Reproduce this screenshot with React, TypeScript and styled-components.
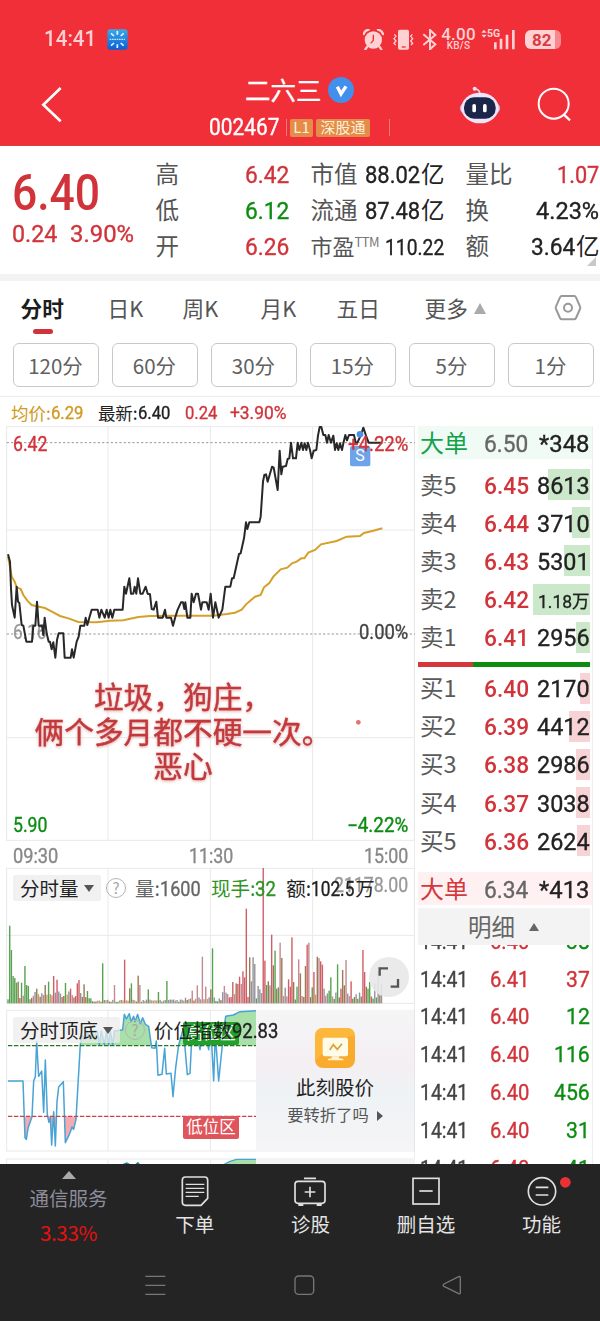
import React from "react";
import styled, { createGlobalStyle } from "styled-components";

const RED = "#d0343a";
const GREEN = "#0d8c12";
const CJK = '"Noto Sans CJK SC", sans-serif';
const LATIN = 'Roboto, "Noto Sans CJK SC", sans-serif';

const Global = createGlobalStyle`
  * { box-sizing: border-box; }
  body { margin: 0; background: #fff; font-family: ${CJK}; color: #222; }
`;

/* Figures are set in a narrowed face: each one is fitted to a given width. */
const advance = (ch: string) => {
  if (ch === ".") return 0.28;
  if (ch === ":") return 0.26;
  if (ch === "%") return 0.74;
  if (ch === "+") return 0.56;
  if (ch === "*") return 0.44;
  if (ch === "−") return 0.57;
  if (ch > "\u2fff") return 1;
  return 0.567;
};
const FigureBox = styled.span<{ $w: number }>`
  display: inline-block;
  width: ${(p) => p.$w}px;
  white-space: nowrap;
`;
const FigureText = styled.span<{ $size: number; $scale: number; $weight: number; $color?: string }>`
  display: inline-block;
  font-family: ${LATIN};
  font-size: ${(p) => p.$size}px;
  font-weight: ${(p) => p.$weight};
  -webkit-text-stroke: ${(p) => (p.$weight === 400 ? "0.35px currentColor" : "0")};
  line-height: 1;
  color: ${(p) => p.$color ?? "inherit"};
  transform: scaleX(${(p) => p.$scale});
  transform-origin: left center;
`;
type FigureProps = { children: string; size: number; w: number; weight?: number; color?: string };
const Figure = ({ children, size, w, weight = 400, color }: FigureProps) => {
  const natural = [...children].reduce((s, c) => s + advance(c), 0) * size;
  return (
    <FigureBox $w={w}>
      <FigureText $size={size} $scale={w / natural} $weight={weight} $color={color}>
        {children}
      </FigureText>
    </FigureBox>
  );
};

const Screen = styled.div`
  width: 600px;
  height: 1321px;
  overflow: hidden;
  display: flex;
  flex-direction: column;
  background: #fff;
`;

/* ---------- header ---------- */
const Header = styled.header`
  height: 146px;
  flex: none;
  background: #f12f38;
  border-bottom: 1px solid #d93f49;
  color: #fff;
`;
const StatusBar = styled.div`
  height: 76px;
  padding: 2px 39px 0 44px;
  display: flex;
  align-items: center;
  color: #ffd1d3;
`;
const AppBadge = styled.svg`
  margin-left: 11px;
`;
const StatusIcons = styled.div`
  margin-left: auto;
  display: flex;
  align-items: center;
`;
const Speed = styled.div`
  width: 35px;
  margin: 0 4px 0 3px;
  text-align: center;
  font: 500 17px/13px Roboto, sans-serif;
  letter-spacing: 0.2px;
  small {
    display: block;
    font: 500 10px/9px Roboto, sans-serif;
  }
`;
const Network = styled.div`
  display: flex;
  position: relative;
  width: 37px;
  height: 21px;
  span {
    position: absolute;
    left: 7px;
    top: -1px;
    font: 700 10.5px/12px Roboto, sans-serif;
  }
`;
const Battery = styled.div`
  width: 36px;
  height: 19px;
  margin-left: 8px;
  border-radius: 6px;
  background: linear-gradient(90deg, #ffd1d3 30px, #f8888e 30px);
  color: #d93b42;
  font: 700 17px/20px Roboto, sans-serif;
  padding-left: 7px;
`;
const TitleBar = styled.div`
  height: 69px;
  display: grid;
  grid-template-columns: 209px 190px 1fr;
`;
const BackCell = styled.div`
  padding: 10px 0 0 40px;
`;
const TitleCell = styled.div`
  display: flex;
  flex-direction: column;
`;
const Name = styled.div`
  display: flex;
  align-items: center;
  gap: 6px;
  height: 28px;
  padding-left: 36px;
  font-size: 25.5px;
  line-height: 28px;
  span {
    height: 30px;
    -webkit-text-stroke: 0.3px currentColor;
  }
`;
const CodeRow = styled.div`
  display: flex;
  align-items: center;
  height: 23px;
  margin-top: 12px;
`;
const Rule = styled.i<{ $ml: number }>`
  width: 1px;
  height: 17px;
  margin-left: ${(p) => p.$ml}px;
  background: #f27a70;
`;
const Tag = styled.span<{ $w: number; $ml: number }>`
  width: ${(p) => p.$w}px;
  margin-left: ${(p) => p.$ml}px;
  height: 18px;
  border-radius: 2px;
  background: #e48d4b;
  color: #fff0d9;
  font: 15px/16px ${CJK};
  text-align: center;
`;
const HeaderActions = styled.div`
  display: flex;
  padding: 10px 0 0 60px;
  gap: 36px;
`;

/* ---------- quote ---------- */
const Quote = styled.section`
  flex: none;
  height: 135px;
  border-bottom: 7px solid #f3f3f3;
  padding-left: 12px;
  display: grid;
  grid-template-columns: 143.5px 134px 134px 134px;
  position: relative;
`;
const PriceBlock = styled.div`
  padding-top: 20px;
  color: ${RED};
`;
const BigPrice = styled.div`
  height: 54px;
  display: flex;
  align-items: center;
`;
const Change = styled.div`
  display: flex;
  gap: 12px;
  height: 26px;
  align-items: center;
  margin-top: 1px;
`;
const StatColumn = styled.div<{ $ml?: number }>`
  padding-top: 9px;
  margin-left: ${(p) => p.$ml ?? 0}px;
  width: 134px;
`;
const Stat = styled.div`
  height: 36.2px;
  display: flex;
  align-items: center;
  justify-content: space-between;
  font-size: 23.5px;
  line-height: 35px;
  color: #555;
  white-space: nowrap;
`;
const Ratio = styled.span`
  display: inline-flex;
  font-size: 22px;
  sup {
    font-size: 13px;
    line-height: 28px;
    letter-spacing: -0.5px;
    color: #777;
    vertical-align: baseline;
  }
`;
const Unit = styled.span`
  display: inline-flex;
  align-items: center;
  color: #222;
`;
const Corner = styled.i`
  position: absolute;
  right: 4px;
  bottom: 8px;
  border-left: 9px solid transparent;
  border-bottom: 9px solid #c8c8c8;
`;

/* ---------- tabs ---------- */
const Tabs = styled.nav`
  flex: none;
  height: 54px;
  display: grid;
  grid-template-columns: 87px 75px 78px 76px 88px 149px 1fr;
  padding-left: 20.5px;
`;
const Tab = styled.div<{ $active?: boolean }>`
  font-size: 21.7px;
  line-height: 53px;
  height: 53px;
  color: ${(p) => (p.$active ? "#1d1d1d" : "#555")};
  font-weight: ${(p) => (p.$active ? 700 : 400)};
  &::after {
    content: "";
    display: ${(p) => (p.$active ? "block" : "none")};
    width: 20px;
    height: 5px;
    margin: -5px 0 0 12px;
    border-radius: 3px;
    background: ${RED};
  }
`;
const UpMark = styled.i<{ $w: number; $h: number; $c: string; $ml: number; $up?: number }>`
  display: inline-block;
  margin-left: ${(p) => p.$ml}px;
  border: ${(p) => p.$w / 2}px solid transparent;
  border-top: 0;
  border-bottom: ${(p) => p.$h}px solid ${(p) => p.$c};
  vertical-align: ${(p) => p.$up ?? 0}px;
`;
const DownMark = styled.i`
  display: inline-block;
  border: 5px solid transparent;
  border-bottom: 0;
  border-top: 7px solid #555;
`;
const Periods = styled.div`
  flex: none;
  height: 62px;
  padding: 8px 0 0 12.5px;
  display: flex;
  gap: 13px;
  border-bottom: 1px solid #ededed;
`;
const Period = styled.button`
  flex: none;
  width: 86px;
  height: 44px;
  padding: 0;
  border: 1px solid #c9c9c9;
  border-radius: 6px;
  background: #fff;
  color: #606060;
  font: 20.5px/42px ${CJK};
`;
const Legend = styled.div`
  flex: none;
  height: 29px;
  display: flex;
  align-items: center;
  padding: 2px 0 0 11px;
  font-size: 17.5px;
  line-height: 20px;
`;
const LegendItem = styled.span<{ $c: string; $mr?: number }>`
  display: inline-flex;
  align-items: center;
  color: ${(p) => p.$c};
  margin-right: ${(p) => p.$mr ?? 14}px;
`;

/* ---------- body ---------- */
const Body = styled.main`
  flex: none;
  height: 738px;
  overflow: hidden;
  display: grid;
  grid-template-columns: 414px 186px;
`;
const Charts = styled.div`
  padding-left: 6px;
`;
const Panel = styled.div<{ $h: number; $gap?: number }>`
  position: relative;
  width: 409px;
  height: ${(p) => p.$h}px;
  margin-bottom: ${(p) => p.$gap ?? 0}px;
  svg {
    display: block;
  }
`;
const AxisLabel = styled.div<{ $top: number; $right?: boolean; $faded?: boolean }>`
  position: absolute;
  top: ${(p) => p.$top}px;
  ${(p) => (p.$right ? "right: 6px;" : "left: 7px;")}
  line-height: 20px;
  opacity: ${(p) => (p.$faded ? 0.75 : 1)};
`;
const Trace = styled.svg`
  position: absolute;
  left: 0;
  top: 0;
`;
const Remark = styled.div`
  position: absolute;
  left: 0;
  top: 253px;
  width: 354px;
  text-align: center;
  font-size: 29.7px;
  line-height: 34.5px;
  -webkit-text-stroke: 0.4px #c2393c;
  color: #c2393c;
  white-space: nowrap;
  filter: drop-shadow(0 1px 1.5px #e3aaaa);
`;
const TimeAxis = styled.div`
  height: 26px;
  width: 409px;
  display: flex;
  justify-content: space-between;
  align-items: center;
  padding: 4px 6px 0 7px;
  line-height: 20px;
`;
const Overlay = styled.div<{ $top: number }>`
  position: absolute;
  left: 7px;
  top: ${(p) => p.$top}px;
  height: 26px;
  display: flex;
  align-items: center;
  white-space: nowrap;
  font-size: 19.5px;
  line-height: 26px;
`;
const Picker = styled.div<{ $w: number }>`
  width: ${(p) => p.$w}px;
  height: 26px;
  padding-left: 7px;
  display: flex;
  align-items: center;
  gap: 5px;
  background: rgba(236, 236, 236, 0.75);
  border-radius: 2px;
  color: #222;
`;
const Help = styled.span`
  width: 20px;
  height: 20px;
  margin: 0 9px 0 5px;
  border: 1px solid #b5b5b5;
  border-radius: 50%;
  text-align: center;
  font: 15px/18px ${CJK};
  color: #a8a8a8;
`;
const Reading = styled.span<{ $c: string; $mr?: number }>`
  display: inline-flex;
  align-items: center;
  margin-right: ${(p) => p.$mr ?? 10}px;
  color: ${(p) => p.$c};
`;
const Expand = styled.div`
  position: absolute;
  right: 6px;
  top: 90px;
  width: 40px;
  height: 40px;
  border-radius: 50%;
  background: rgba(232, 232, 232, 0.9);
`;
const Zone = styled.div<{ $top: number; $bg: string }>`
  position: absolute;
  left: 177px;
  top: ${(p) => p.$top}px;
  width: 56px;
  height: 23px;
  border-radius: 2px;
  background: ${(p) => p.$bg};
  color: #fff;
  font: 16.5px/21px ${CJK};
  text-align: center;
`;
const Promo = styled.div`
  position: absolute;
  right: 0;
  top: 1px;
  width: 159px;
  height: 142px;
  display: flex;
  flex-direction: column;
  align-items: center;
  background: linear-gradient(180deg, #f5f5f6 0%, #f4eff3 38%, #eef3f5 62%, #f6f4f6 100%);
  border-right: 1px solid #e6e6e6;
  padding-top: 18px;
  b {
    font: 19.5px/28px ${CJK};
    margin-top: 5px;
    color: #222;
  }
  span {
    font: 16.3px/24px ${CJK};
    color: #555;
    margin: 1px 0 0 0;
  }
  i {
    display: inline-block;
    border: 5px solid transparent;
    border-right: 0;
    border-left: 6px solid #555;
    margin-left: 8px;
    vertical-align: 0;
  }
`;

/* ---------- order book ---------- */
const Book = styled.div`
  width: 179px;
  padding-left: 3px;
  border-left: 1px solid #ececec;
  border-right: 1px solid #eee;
  height: 738px;
  overflow: hidden;
`;
const Block = styled.div<{ $bg: string; $c: string; $mt?: number }>`
  height: 33px;
  margin-top: ${(p) => p.$mt ?? 0}px;
  padding: 0 0 1px 2px;
  display: grid;
  grid-template-columns: 64px 48px 58px;
  align-items: center;
  background: ${(p) => p.$bg};
  color: ${(p) => p.$c};
  font-size: 24px;
  line-height: 32px;
`;
const Level = styled.div<{ $bar: number; $bg: string }>`
  height: 38.2px;
  padding: 0 0 2px 2px;
  display: grid;
  grid-template-columns: 64px 48px 58px;
  align-items: center;
  color: #5a5a5a;
  font-size: 23.5px;
  line-height: 36px;
  width: 172px;
  background: linear-gradient(${(p) => p.$bg}, ${(p) => p.$bg}) right center / ${(p) => p.$bar}px 31px no-repeat;
`;
const Right = styled.div`
  text-align: right;
  display: flex;
  justify-content: flex-end;
  align-items: center;
`;
const Levels = styled.div<{ $mt: number }>`
  margin-top: ${(p) => p.$mt}px;
`;
const Balance = styled.div`
  width: 172px;
  height: 5px;
  margin-top: 6px;
  background: linear-gradient(90deg, #d5383c 55px, #0d8c12 55px);
`;
const DetailHead = styled.div`
  margin-top: 3px;
  width: 172px;
  height: 37px;
  background: #f3f3f3;
  color: #666;
  font-size: 23.5px;
  line-height: 37px;
  padding-left: 50px;
`;
const Ticks = styled.div`
  height: 219px;
  overflow: hidden;
  width: 172px;
`;
const TickList = styled.div`
  margin-top: -22px;
`;
const Tick = styled.div`
  height: 37.8px;
  padding-left: 2px;
  display: grid;
  grid-template-columns: 70px 42px 58px;
  align-items: center;
  line-height: 38px;
`;

/* ---------- bottom ---------- */
const Bottom = styled.footer`
  flex: none;
  height: 157px;
  background: #242424;
`;
const Nav = styled.div`
  height: 84px;
  display: grid;
  grid-template-columns: 137px repeat(4, 115.6px);
`;
const Sector = styled.div`
  display: flex;
  flex-direction: column;
  align-items: center;
  padding-top: 7px;
  color: #8c8c9b;
  font-size: 19.5px;
  line-height: 28px;
  span {
    margin-top: 5px;
  }
  b {
    margin-top: 6px;
    font: 20.5px/28px ${CJK};
    letter-spacing: -0.3px;
    color: #e90f10;
  }
`;
const NavItem = styled.div`
  display: flex;
  flex-direction: column;
  align-items: center;
  padding-top: 11px;
  color: #e4e4e4;
  font-size: 19.5px;
  line-height: 28px;
  svg {
    margin-bottom: 3px;
    overflow: visible;
  }
`;
const SystemNav = styled.div`
  height: 73px;
  display: flex;
  padding: 26px 0 0 140px;
  gap: 119px;
`;

/* ---------- chart data ---------- */
const price =
  "24,658 30,680 33,760 36,810 44,848 50,755 54,800 58,804 65,870 70,872 79,920 96,920 100,872 106,872 111,800 116,872 126,872 130,900 134,848 140,895 146,920 150,920 155,943 160,922 166,968 171,915 176,895 190,895 194,968 212,968 216,943 221,968 230,920 236,905 241,872 253,872 257,848 262,870 268,848 275,824 293,824 298,848 304,824 314,848 320,824 326,848 331,824 337,848 343,824 368,824 373,755 378,776 388,730 393,776 400,776 404,755 409,776 414,730 421,776 428,776 437,755 443,776 450,778 455,822 461,824 469,800 474,848 488,848 495,824 499,848 513,848 519,872 526,846 533,824 543,802 549,802 553,822 556,802 562,848 571,848 575,776 581,802 588,776 594,776 603,824 607,802 620,802 626,824 632,776 639,848 646,802 656,848 667,824 676,755 691,755 696,730 701,730 717,657 722,655 732,610 738,562 742,582 748,562 778,562 782,545 789,440 793,420 798,418 803,440 816,395 821,398 833,465 839,347 844,418 848,395 858,393 863,372 868,370 873,323 879,370 888,370 893,323 898,345 904,323 909,345 914,325 919,345 924,323 930,345 935,370 941,347 949,345 954,302 959,276 964,276 970,300 976,300 981,323 986,300 993,323 1000,302 1005,345 1010,325 1015,345 1020,325 1026,345 1030,325 1036,300 1041,316 1047,300 1062,300 1067,323 1072,323 1083,300 1090,278 1098,302 1106,323 1147,323";
const average =
  "24,665 29,690 35,725 44,740 50,757 62,762 70,780 82,797 95,810 110,814 135,819 160,832 180,843 205,850 235,861 290,862 330,857 370,856 415,846 450,843 520,842 640,842 680,837 705,833 725,824 738,808 765,785 782,780 792,757 808,744 820,725 842,703 862,698 876,685 890,680 904,670 913,670 925,653 945,645 963,628 1010,618 1040,605 1080,603 1092,594 1120,587 1147,580";
const zone =
  "24,228 69,228 75,398 79,403 84,370 96,335 101,228 106,215 110,110 116,214 125,198 131,322 136,165 142,330 147,352 151,338 155,420 161,320 166,423 171,290 176,246 190,230 196,413 205,395 212,378 216,366 221,373 228,343 234,238 241,118 247,92 256,102 262,78 270,104 275,78 292,78 298,118 304,78 313,118 320,78 326,120 331,78 338,120 343,78 368,74 373,28 379,42 388,26 393,50 401,34 405,50 413,28 421,56 428,38 436,58 446,64 455,128 465,130 469,108 474,211 486,208 494,130 499,207 513,205 519,275 527,188 536,120 550,70 562,209 570,205 576,85 585,60 600,134 607,95 616,80 626,134 632,62 641,227 646,88 656,228 664,150 672,72 677,34 700,30 720,20 768,17";

const HIGH: Record<number, [number, string]> = {
  1: [233, "g"], 2: [160, "g"], 3: [82, "g"], 4: [76, "g"], 5: [62, "g"], 6: [65, "n"], 8: [62, "g"], 10: [112, "g"], 11: [55, "g"], 12: [52, "g"],
  17: [44, "n"], 22: [55, "n"], 24: [65, "g"], 27: [82, "r"], 29: [71, "r"], 34: [61, "g"], 37: [44, "r"], 41: [60, "r"], 42: [70, "r"], 45: [57, "n"], 47: [37, "g"],
  56: [120, "g"], 63: [55, "p"], 69: [131, "r"], 72: [45, "n"], 73: [60, "g"], 77: [83, "n"], 78: [55, "p"], 83: [42, "g"], 89: [34, "g"], 94: [67, "g"],
  109: [38, "p"], 112: [54, "p"], 115: [140, "p"], 117: [50, "p"], 120: [42, "n"], 121: [165, "g"], 128: [52, "p"], 133: [64, "r"], 135: [60, "n"], 136: [58, "r"], 137: [80, "r"],
  138: [58, "p"], 139: [96, "r"], 140: [78, "r"], 141: [284, "r"], 143: [138, "n"], 144: [66, "s"], 145: [138, "s"], 146: [118, "s"], 148: [52, "s"], 149: [42, "s"], 151: [406, "r"], 152: [128, "r"],
  153: [55, "g"], 154: [66, "n"], 155: [54, "s"], 156: [206, "r"], 157: [114, "n"], 158: [158, "g"], 159: [44, "n"], 160: [48, "g"], 161: [182, "p"], 162: [136, "n"], 164: [47, "s"], 166: [72, "r"], 167: [50, "r"],
  168: [198, "r"], 169: [64, "n"], 171: [50, "g"], 172: [132, "p"], 173: [90, "n"], 176: [112, "n"], 177: [176, "r"], 178: [182, "p"], 180: [48, "g"], 181: [94, "r"], 183: [140, "n"], 184: [136, "p"], 185: [126, "r"], 186: [116, "r"], 187: [44, "s"],
  190: [38, "g"], 191: [78, "g"], 195: [117, "g"], 197: [44, "r"], 198: [100, "n"], 199: [54, "n"], 200: [130, "p"], 203: [66, "r"], 210: [160, "r"], 211: [94, "r"], 212: [50, "n"], 213: [44, "g"], 214: [64, "g"], 217: [60, "s"], 219: [96, "s"], 221: [60, "s"],
};
const INK: Record<string, string> = { g: "#58a350", r: "#cf5f66", p: "#c48a90", n: "#9a7a55", s: "#93939a", o: "#c6a063" };
const bars = Array.from({ length: 222 }, (_, i) => {
  const known = HIGH[i];
  if (known) return { x: 22 + i * 5.07, h: known[0], c: INK[known[1]] };
  const n = (Math.sin(i * 12.9898) * 43758.5453) % 1;
  const r = Math.abs(n);
  const base = i < 50 ? 24 : i < 105 ? 8 : i < 127 ? 12 : i < 150 ? 26 : i > 213 ? 28 : 22;
  return { x: 22 + i * 5.07, h: base * (0.5 + r), c: INK["grnposs"[Math.floor(r * 6.99)]] };
});

const Grid = ({ ys, bottom, top }: { ys: number[]; top: number; bottom: number }) => (
  <g stroke="#e9e9e9" strokeWidth="3">
    {[20, 324, 631, 938, 1243].map((x) => (
      <line key={x} x1={x} x2={x} y1={top} y2={bottom} />
    ))}
    {ys.map((y) => (
      <line key={y} x1="18" x2="1245" y1={y} y2={y} />
    ))}
  </g>
);

const sells: [string, string, string, number][] = [
  ["卖5", "6.45", "8613", 42],
  ["卖4", "6.44", "3710", 18],
  ["卖3", "6.43", "5301", 26],
  ["卖2", "6.42", "1.18万", 57],
  ["卖1", "6.41", "2956", 14],
];
const buys: [string, string, string, number][] = [
  ["买1", "6.40", "2170", 10],
  ["买2", "6.39", "4412", 21],
  ["买3", "6.38", "2986", 14],
  ["买4", "6.37", "3038", 14],
  ["买5", "6.36", "2624", 13],
];
const ticks: [string, string, string][] = [
  ["6.40", "38", GREEN],
  ["6.41", "37", RED],
  ["6.40", "12", GREEN],
  ["6.40", "116", GREEN],
  ["6.40", "456", GREEN],
  ["6.40", "31", GREEN],
  ["6.40", "41", GREEN],
];

const LevelRow = ({ row, bg }: { row: [string, string, string, number]; bg: string }) => (
  <Level $bar={row[3]} $bg={bg}>
    <span>{row[0]}</span>
    <Figure size={24} w={45} weight={500} color={RED}>{row[1]}</Figure>
    <Right>
      {row[2].length > 4 ? (
        <Figure size={18.5} w={52} color="#222">{row[2]}</Figure>
      ) : (
        <Figure size={24} w={53} color="#222">{row[2]}</Figure>
      )}
    </Right>
  </Level>
);

export default function App() {
  return (
    <Screen>
      <Global />
      <Header>
        <StatusBar>
          <Figure size={21.5} w={52} weight={500}>14:41</Figure>
          <AppBadge width="21" height="21" viewBox="0 0 63 63">
            <defs>
              <linearGradient id="app" x1="0" y1="0" x2="0" y2="1">
                <stop offset="0" stopColor="#3aa9e8" />
                <stop offset="1" stopColor="#0a5fd8" />
              </linearGradient>
            </defs>
            <rect x="1" y="1" width="61" height="61" rx="9" fill="url(#app)" />
            <g stroke="#eaf6ff" strokeWidth="5">
              <path d="M31 6v11M31 46v11M12 13l9 8M50 13l-9 8M12 50l9-8M50 50l-9-8" />
            </g>
            <path d="M8 31h46" stroke="#b9e6ff" strokeWidth="4" strokeDasharray="5 2" />
          </AppBadge>
          <StatusIcons>
            <svg width="21" height="21" viewBox="190 84 63 63">
              <circle cx="221" cy="117" r="26" fill="#ffd1d3" />
              <path d="M192 99q3-11 15-13M250 99q-3-11-15-13M202 138l-5 7M240 138l5 7" stroke="#ffd1d3" strokeWidth="7" fill="none" strokeLinecap="round" />
              <path d="M221 101v17l-8 9" stroke="#f12f38" strokeWidth="4" fill="none" />
            </svg>
            <svg width="30" height="21" viewBox="253 84 90 63">
              <rect x="295" y="86" width="33" height="60" rx="5" fill="#ffd1d3" />
              <path d="M306 138h12" stroke="#f12f38" strokeWidth="4" />
              <path d="M284 100l5 6-6 7 6 7-6 7 5 5M338 100l-5 6 6 7-6 7 6 7-5 5" stroke="#ffd1d3" strokeWidth="4" fill="none" />
            </svg>
            <svg width="24" height="21" viewBox="342 84 72 63">
              <path d="M370 100l36 30-16 15V87l16 15-36 30" stroke="#ffd1d3" strokeWidth="6" fill="none" />
            </svg>
            <Speed>4.00<small>KB/S</small></Speed>
            <Network>
              <svg width="37" height="21" viewBox="541 84 111 63">
                <path d="M545 95l8-9 8 9zM545 101l8 9 8-9z" fill="#ffd1d3" />
                <path d="M587 124v21M604 113v32M622 101v44M641 87v58" stroke="#ffd1d3" strokeWidth="8" />
              </svg>
              <span>5G</span>
            </Network>
            <Battery>82</Battery>
          </StatusIcons>
        </StatusBar>
        <TitleBar>
          <BackCell>
            <svg width="24" height="36" viewBox="120 258 72 108">
              <path d="M182 264l-52 50 52 50" stroke="#fff" strokeWidth="8" fill="none" />
            </svg>
          </BackCell>
          <TitleCell>
            <Name>
              <span>二六三</span>
              <svg width="26" height="26" viewBox="0 0 78 78">
                <circle cx="39" cy="39" r="39" fill="#438fec" />
                <path d="M28 29l11 22 15-23" stroke="#fff" strokeWidth="10" fill="none" />
              </svg>
            </Name>
            <CodeRow>
              <Figure size={23.5} w={71}>002467</Figure>
              <Rule $ml={6} />
              <Tag $w={23} $ml={3}>L1</Tag>
              <Tag $w={54} $ml={3}>深股通</Tag>
              <Rule $ml={19} />
            </CodeRow>
          </TitleCell>
          <HeaderActions>
            <svg width="42" height="39" viewBox="477 256 126 117">
              <path d="M540 282q-1-16-14-17" stroke="#eed7ee" strokeWidth="5" fill="none" />
              <circle cx="524" cy="264" r="6" fill="#f7dff0" />
              <ellipse cx="540" cy="323" rx="60" ry="30" fill="#cbbdf0" />
              <ellipse cx="540" cy="322" rx="56" ry="46" fill="#f0e4fb" />
              <rect x="492" y="290" width="95" height="64" rx="30" fill="#1b2547" />
              <rect x="517" y="310" width="11" height="25" rx="5" fill="#fff" />
              <rect x="549" y="310" width="11" height="25" rx="5" fill="#fff" />
            </svg>
            <svg width="34" height="36" viewBox="709 262 102 108">
              <circle cx="759" cy="315" r="45" fill="none" stroke="#fff" strokeWidth="6" />
              <path d="M789 347l19 18" stroke="#fff" strokeWidth="7" />
            </svg>
          </HeaderActions>
        </TitleBar>
      </Header>

      <Quote>
        <PriceBlock>
          <BigPrice><Figure size={50} w={88} weight={500}>6.40</Figure></BigPrice>
          <Change>
            <Figure size={24.5} w={46}>0.24</Figure>
            <Figure size={24.5} w={65}>3.90%</Figure>
          </Change>
        </PriceBlock>
        <StatColumn>
          <Stat>高<Figure size={24.5} w={45} color={RED}>6.42</Figure></Stat>
          <Stat>低<Figure size={24.5} w={45} color={GREEN}>6.12</Figure></Stat>
          <Stat>开<Figure size={24.5} w={45} color={RED}>6.26</Figure></Stat>
        </StatColumn>
        <StatColumn $ml={21}>
          <Stat>市值<Unit><Figure size={24.5} w={56}>88.02</Figure>亿</Unit></Stat>
          <Stat>流通<Unit><Figure size={24.5} w={56}>87.48</Figure>亿</Unit></Stat>
          <Stat><Ratio>市盈<sup>TTM</sup></Ratio><Figure size={22.5} w={60} color="#222">110.22</Figure></Stat>
        </StatColumn>
        <StatColumn $ml={42}>
          <Stat>量比<Figure size={24.5} w={43} color={RED}>1.07</Figure></Stat>
          <Stat>换<Figure size={24.5} w={64} color="#222">4.23%</Figure></Stat>
          <Stat>额<Unit><Figure size={24.5} w={45}>3.64</Figure>亿</Unit></Stat>
        </StatColumn>
        <Corner />
      </Quote>

      <Tabs>
        <Tab $active>分时</Tab>
        <Tab>日K</Tab>
        <Tab>周K</Tab>
        <Tab>月K</Tab>
        <Tab>五日</Tab>
        <Tab>更多<UpMark $w={13} $h={11} $c="#aaa" $ml={6} $up={3} /></Tab>
        <svg width="49" height="42" viewBox="0 -38 147 126" style={{ marginLeft: -20 }}>
          <path d="M23 7h38q3 0 5 4l12 27q2 4 0 8L66 73q-2 4-5 4H23q-3 0-5-4L6 46q-2-4 0-8l12-27q2-4 5-4z" fill="none" stroke="#999" strokeWidth="6" />
          <circle cx="42" cy="42" r="12" fill="none" stroke="#999" strokeWidth="6" />
        </svg>
      </Tabs>
      <Periods>
        {["120分", "60分", "30分", "15分", "5分", "1分"].map((p) => (
          <Period key={p}>{p}</Period>
        ))}
      </Periods>
      <Legend>
        <LegendItem $c="#d09a22">均价:<Figure size={18.5} w={33}>6.29</Figure></LegendItem>
        <LegendItem $c="#222">最新:<Figure size={18.5} w={33}>6.40</Figure></LegendItem>
        <LegendItem $c={RED} $mr={12}><Figure size={18.5} w={33}>0.24</Figure></LegendItem>
        <LegendItem $c={RED}><Figure size={18.5} w={57}>+3.90%</Figure></LegendItem>
      </Legend>

      <Body>
        <Charts>
          <Panel $h={415}>
            <svg width="409" height="415" viewBox="18 273 1227 1245">
              <Grid ys={[275, 585, 1208, 1516]} top={275} bottom={1516} />
              <path d="M20 323H1245M20 897H1245" stroke="#999" strokeWidth="3" strokeDasharray="7 6" />
            </svg>
            <AxisLabel $top={196} $faded><Figure size={19.5} w={34} color="#777">6.16</Figure></AxisLabel>
            <AxisLabel $top={196} $right><Figure size={19.5} w={50} color="#444">0.00%</Figure></AxisLabel>
            <Trace width="409" height="415" viewBox="18 273 1227 1245">
              <polyline points={average} fill="none" stroke="#d5a02a" strokeWidth="6" />
              <polyline points={price} fill="none" stroke="#282828" strokeWidth="6" strokeLinejoin="round" />
              <circle cx="1080" cy="298" r="10" fill="#4d8fe8" />
              <rect x="1050" y="333" width="61" height="61" rx="6" fill="#6ea3ea" />
              <text x="1080" y="379" textAnchor="middle" fill="#fff" fontSize="48" fontFamily="Roboto, sans-serif">S</text>
              <circle cx="1075" cy="1162" r="7" fill="#e0726f" />
            </Trace>
            <AxisLabel $top={8}><Figure size={19.5} w={35} color={RED}>6.42</Figure></AxisLabel>
            <AxisLabel $top={8} $right><Figure size={19.5} w={61} color={RED}>+4.22%</Figure></AxisLabel>
            <AxisLabel $top={389}><Figure size={19.5} w={35} color={GREEN}>5.90</Figure></AxisLabel>
            <AxisLabel $top={389} $right><Figure size={19.5} w={62} color={GREEN}>−4.22%</Figure></AxisLabel>
            <Remark>垃圾，狗庄，<br />俩个多月都不硬一次。<br />恶心</Remark>
          </Panel>
          <TimeAxis>
            <Figure size={19.5} w={46} color="#888">09:30</Figure>
            <Figure size={19.5} w={45} color="#888">11:30</Figure>
            <Figure size={19.5} w={45} color="#888">15:00</Figure>
          </TimeAxis>
          <Panel $h={137} $gap={5}>
            <svg width="409" height="137" viewBox="18 6 1227 411">
              <Grid ys={[10, 211, 415]} top={10} bottom={415} />
              {bars.map((b) => (
                <rect key={b.x} x={b.x} y={415 - b.h} width="4.2" height={b.h} fill={b.c} />
              ))}
            </svg>
            <Expand>
              <svg width="40" height="40" viewBox="0 0 120 120">
                <path d="M32 56V34H57M65 89H87V66" fill="none" stroke="#555" strokeWidth="7" />
              </svg>
            </Expand>
            <AxisLabel $top={8} $right><Figure size={19.5} w={75} color="#999">21178.00</Figure></AxisLabel>
            <Overlay $top={8}>
              <Picker $w={88}>分时量<DownMark /></Picker>
              <Help>?</Help>
              <Reading $c="#666">量:<Figure size={20} w={41}>1600</Figure></Reading>
              <Reading $c="#2f9426">现手:<Figure size={20} w={21}>32</Figure></Reading>
              <Reading $c="#222" $mr={0}>额:<Figure size={20} w={44}>102.5</Figure>万</Reading>
            </Overlay>
          </Panel>
          <Panel $h={143} $gap={6}>
            <svg width="409" height="143" viewBox="18 12 1227 429">
              <defs>
                <clipPath id="above"><rect x="18" y="12" width="750" height="110" /></clipPath>
                <clipPath id="below"><rect x="18" y="334" width="750" height="110" /></clipPath>
              </defs>
              <Grid ys={[16, 228, 438]} top={16} bottom={438} />
              <polygon points={`24,122 ${zone} 768,122`} fill="#a9dfa9" clipPath="url(#above)" />
              <polygon points={`24,334 ${zone} 768,334`} fill="#f4aab0" clipPath="url(#below)" />
              <polyline points={zone} fill="none" stroke="#48a3d6" strokeWidth="4.5" strokeLinejoin="round" />
              <path d="M24 122H768" stroke="#27752b" strokeWidth="4" strokeDasharray="13 5" />
              <path d="M24 334H768" stroke="#c9444a" strokeWidth="4" strokeDasharray="13 5" />
            </svg>
            <Zone $top={13} $bg="#21a12b">高位区</Zone>
            <Zone $top={107} $bg="#e0555b">低位区</Zone>
            <Promo>
              <svg width="40" height="40" viewBox="0 0 120 120">
                <rect width="120" height="120" rx="24" fill="#f9ab2d" />
                <path d="M0 24Q0 0 24 0H96Q120 0 120 24Q60 30 0 100z" fill="#ffbf45" opacity="0.6" />
                <rect x="23" y="29" width="76" height="56" rx="6" fill="#fffbe9" />
                <path d="M50 85h22v6q14 0 14 6H38q0-6 12-6z" fill="#fff3d6" />
                <path d="M44 66l11-16 12 14 14-17" fill="none" stroke="#dba13c" strokeWidth="5" />
              </svg>
              <b>此刻股价</b>
              <span>要转折了吗<i /></span>
            </Promo>
            <Overlay $top={8}>
              <Picker $w={107}>分时顶底<DownMark /></Picker>
              <Help>?</Help>
              <Reading $c="#222">价位指数<Figure size={20} w={47}>92.83</Figure></Reading>
            </Overlay>
          </Panel>
          <Panel $h={6}>
            <svg width="409" height="6" viewBox="18 459 1227 18">
              <Grid ys={[462]} top={462} bottom={480} />
              <path d="M673 480q14-12 35-17h60v17z" fill="#a9dfa9" />
              <path d="M670 480q16-12 40-17h58" fill="none" stroke="#48a3d6" strokeWidth="4" />
              <path d="M370 478l10-4 8 4M408 478l6-5 4 5" stroke="#2c8aa0" strokeWidth="4" />
              <rect x="768" y="459" width="477" height="21" fill="#f4f4f4" />
            </svg>
          </Panel>
        </Charts>

        <Book>
          <Block $bg="#f1fbf6" $c="#14a24c">
            大单
            <Figure size={24} w={45} color="#666">6.50</Figure>
            <Right><Figure size={24} w={51} color="#222">*348</Figure></Right>
          </Block>
          <Levels $mt={6.5}>
            {sells.map((r) => <LevelRow key={r[0]} row={r} bg="#cbe8cb" />)}
          </Levels>
          <Balance />
          <Levels $mt={1.5}>
            {buys.map((r) => <LevelRow key={r[0]} row={r} bg="#f8d3d5" />)}
          </Levels>
          <Block $bg="#fff1f1" $c="#d5383c" $mt={12}>
            大单
            <Figure size={24} w={45} color="#666">6.34</Figure>
            <Right><Figure size={24} w={51} color="#222">*413</Figure></Right>
          </Block>
          <DetailHead>明细<UpMark $w={10} $h={8} $c="#666" $ml={14} $up={5} /></DetailHead>
          <Ticks>
            <TickList>
              {ticks.map(([p, v, c], i) => (
                <Tick key={i}>
                  <Figure size={22} w={49} color="#444">14:41</Figure>
                  <Figure size={22} w={40} color={RED}>{p}</Figure>
                  <Right><Figure size={22} w={v.length * 12} color={c}>{v}</Figure></Right>
                </Tick>
              ))}
            </TickList>
          </Ticks>
        </Book>
      </Body>

      <Bottom>
        <Nav>
          <Sector>
            <UpMark $w={14} $h={8} $c="#aaa" $ml={0} />
            <span>通信服务</span>
            <b>3.33%</b>
          </Sector>
          <NavItem>
            <svg width="30" height="32" viewBox="0 0 90 96" fill="none" stroke="#e0e0e0" strokeWidth="5">
              <path d="M16 6H74Q83 6 83 15V70L63 91H16Q7 91 7 82V15Q7 6 16 6z" />
              <path d="M17 28H73M17 40H73M17 52H73M17 64H56" strokeWidth="4" />
            </svg>
            下单
          </NavItem>
          <NavItem>
            <svg width="34" height="32" viewBox="0 0 102 96" fill="none" stroke="#e0e0e0" strokeWidth="5">
              <rect x="6" y="19" width="90" height="66" rx="9" />
              <path d="M33 10H69M51 35V67M35 51H67" />
              <path d="M16 90H31M71 90H86" strokeWidth="6" />
            </svg>
            诊股
          </NavItem>
          <NavItem>
            <svg width="30" height="32" viewBox="0 0 90 96" fill="none" stroke="#e0e0e0" strokeWidth="5">
              <rect x="6" y="10" width="78" height="77" />
              <path d="M25 48H65" />
            </svg>
            删自选
          </NavItem>
          <NavItem>
            <svg width="30" height="32" viewBox="0 0 90 96" fill="none" stroke="#e0e0e0" strokeWidth="5">
              <circle cx="45" cy="49" r="41" />
              <path d="M26 37H64M26 60H64" />
              <circle cx="115" cy="22" r="16" fill="#ea3236" stroke="none" />
            </svg>
            功能
          </NavItem>
        </Nav>
        <SystemNav>
          <svg width="30" height="22" viewBox="0 0 90 66" fill="none" stroke="#777" strokeWidth="4">
            <path d="M16 7H76M16 34H76M16 61H76" />
          </svg>
          <svg width="30" height="22" viewBox="0 0 90 66" fill="none" stroke="#777" strokeWidth="4">
            <rect x="18" y="6" width="56" height="55" rx="11" />
          </svg>
          <svg width="30" height="22" viewBox="0 0 90 66" fill="none" stroke="#777" strokeWidth="4">
            <path d="M18 30L62 8Q67 6 67 11V56Q67 61 62 59L18 37Q13 34 18 30z" />
          </svg>
        </SystemNav>
      </Bottom>
    </Screen>
  );
}
